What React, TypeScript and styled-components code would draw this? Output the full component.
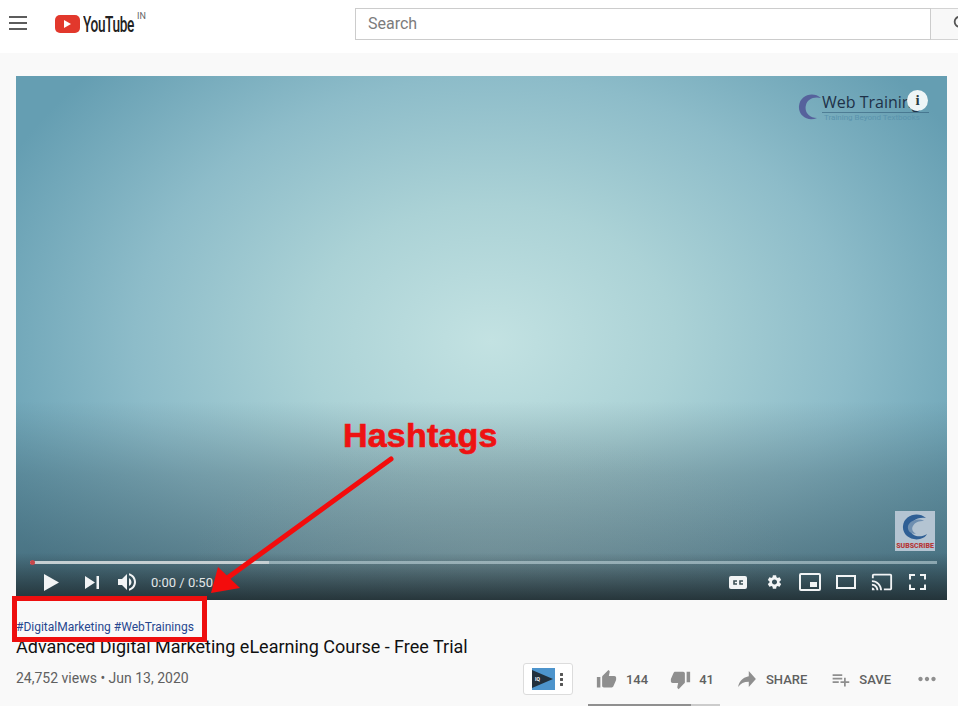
import styled, { createGlobalStyle } from "styled-components";
import {
  MdCast,
  MdMoreHoriz,
  MdPlaylistAdd,
  MdSearch,
  MdSettings,
  MdThumbDown,
  MdThumbUp,
  MdVolumeUp,
} from "react-icons/md";

const GlobalStyle = createGlobalStyle`
  html, body {
    margin: 0;
    width: 958px;
    height: 706px;
    overflow: hidden;
    background: #f9f9f9;
    font-family: Roboto, "Liberation Sans", sans-serif;
  }
  * { box-sizing: border-box; }
`;

const Page = styled.div`
  position: relative;
  width: 958px;
  height: 706px;
  overflow: hidden;
`;

const Header = styled.header`
  height: 53px;
  background: #fff;
  display: flex;
  align-items: flex-start;
  padding: 8px 0 0 9px;
`;

const Burger = styled.div`
  flex: none;
  width: 18px;
  height: 14px;
  margin-top: 8px;
  border-top: 2px solid #5c5c5c;
  border-bottom: 2px solid #5c5c5c;
  display: flex;
  align-items: center;
  &::before {
    content: "";
    width: 100%;
    height: 2px;
    background: #5c5c5c;
  }
`;

const Logo = styled.div`
  flex: none;
  display: flex;
  align-items: flex-start;
  margin-left: 28px;
  margin-top: 7px;
  width: 300px;
`;

const LogoBadge = styled.div`
  flex: none;
  width: 25px;
  height: 18px;
  background: #e2382c;
  border-radius: 5px;
  display: flex;
  align-items: center;
  justify-content: center;
  &::before {
    content: "";
    border-left: 7px solid #fff;
    border-top: 4px solid transparent;
    border-bottom: 4px solid transparent;
  }
`;

const LogoText = styled.span`
  flex: none;
  font-family: Roboto, sans-serif;
  font-weight: 500;
  font-size: 22px;
  line-height: 19px;
  letter-spacing: -0.6px;
  color: #222;
  margin-left: 3px;
  width: 54px;
  white-space: nowrap;
  transform: scaleX(0.62);
  transform-origin: left center;
`;

const Region = styled.sup`
  font-size: 9px;
  line-height: 9px;
  color: #666;
  margin: -3px 0 0 0;
`;

const Search = styled.div`
  display: flex;
  height: 32px;
  flex: none;
`;

const SearchInput = styled.div`
  width: 576px;
  border: 1px solid #ccc;
  background: #fff;
  padding-left: 12px;
  font-size: 16px;
  line-height: 29px;
  color: #7c7c7c;
`;

const SearchButton = styled.div`
  width: 65px;
  border: 1px solid #d3d3d3;
  border-left: 0;
  background: #f8f8f8;
  color: #555;
  font-size: 22px;
  padding: 4px 0 0 20px;
  display: flex;
`;

const Main = styled.main`
  padding: 23px 11px 0 16px;
`;

const Player = styled.div`
  position: relative;
  height: 524px;
  background:
    linear-gradient(to bottom, rgba(30, 42, 46, 0) 91%, rgba(30, 42, 46, 0.85) 100%),
    radial-gradient(ellipse 300px 120px at 475px 475px, rgba(150, 165, 165, 0.2), rgba(150, 165, 165, 0) 100%),
    linear-gradient(to bottom, rgba(45, 70, 82, 0) 62%, rgba(45, 70, 82, 0.28) 76%, rgba(45, 70, 82, 0.58) 100%),
    radial-gradient(ellipse 540px 400px at 475px 265px, #c3e2e2 0%, #abd2d6 34%, #8dbcc9 66%, #659eb2 100%);
`;

const Watermark = styled.div`
  position: absolute;
  top: 16px;
  right: 18px;
  width: 131px;
  height: 30px;
`;

const WatermarkTitle = styled.div`
  position: absolute;
  left: 24px;
  top: 0;
  font-family: "Open Sans", sans-serif;
  font-size: 16px;
  line-height: 20px;
  color: #1e3148;
  white-space: nowrap;
  width: 107px;
  border-bottom: 1px solid rgba(40, 80, 110, 0.5);
`;

const WatermarkSub = styled.div`
  position: absolute;
  left: 26px;
  top: 21px;
  font-size: 8px;
  line-height: 9px;
  color: #5a93ad;
  white-space: nowrap;
`;

const InfoDot = styled.div`
  position: absolute;
  top: 14px;
  right: 19px;
  width: 21px;
  height: 21px;
  border-radius: 50%;
  background: #eef5f6;
  color: #2c3a40;
  font-family: "Liberation Serif", serif;
  font-weight: 700;
  font-size: 15px;
  line-height: 21px;
  text-align: center;
`;

const SubscribeCard = styled.div`
  position: absolute;
  right: 12px;
  bottom: 49px;
  width: 40px;
  height: 40px;
  background: #b4c4d2;
  display: flex;
  flex-direction: column;
  align-items: center;
  padding-top: 2px;
`;

const SubscribeLabel = styled.div`
  font-size: 7px;
  line-height: 9px;
  font-weight: 900;
  white-space: nowrap;
  color: #b6393a;
`;

const Controls = styled.div`
  position: absolute;
  left: 14px;
  right: 10px;
  bottom: 0;
`;

const Progress = styled.div`
  position: relative;
  height: 3px;
  background: rgba(200, 220, 225, 0.55);
`;

const ProgressLoaded = styled.div`
  position: absolute;
  inset: 0 auto 0 0;
  background: #c5cfd2;
`;

const ProgressPlayed = styled.div`
  position: absolute;
  left: 0;
  top: -1px;
  width: 5px;
  height: 5px;
  border-radius: 50%;
  background: #c8474a;
`;

const ControlRow = styled.div`
  height: 36px;
  padding-right: 11px;
  display: flex;
  align-items: center;
  justify-content: space-between;
  color: #f2f4f5;
`;

const ControlGroup = styled.div`
  display: flex;
  align-items: center;
`;

const ControlIcon = styled.span<{ $w: number; $ml: number; $size?: number }>`
  display: flex;
  align-items: center;
  justify-content: center;
  flex: none;
  width: ${(p) => p.$w}px;
  margin-left: ${(p) => p.$ml}px;
  font-size: ${(p) => p.$size ?? 24}px;
`;

const TimeText = styled.span`
  margin-left: 12px;
  font-size: 13px;
  color: #e2e6e7;
`;

const Hashtags = styled.div`
  margin-top: 19px;
  font-size: 12px;
  line-height: 16px;
  color: #27478f;
`;

const Title = styled.h1`
  margin: 0;
  font-weight: 400;
  font-size: 18px;
  line-height: 24px;
  color: #111;
`;

const MetaRow = styled.div`
  margin-top: 4px;
  height: 32px;
  display: flex;
  align-items: center;
  justify-content: space-between;
`;

const Views = styled.div`
  font-size: 14px;
  margin-top: -2px;
  color: #606060;
`;

const Actions = styled.div`
  display: flex;
  align-items: center;
  margin-right: 7px;
  color: #8f8f8f;
`;

const BotCard = styled.div`
  width: 50px;
  height: 32px;
  border: 1px solid #dcdcdc;
  border-radius: 3px;
  background: #fff;
  display: flex;
  align-items: center;
  padding-left: 8px;
  gap: 5px;
  margin-right: 23px;
`;

const BotAvatar = styled.div`
  position: relative;
  width: 23px;
  height: 22px;
  background: #4d94cc;
  display: flex;
  align-items: center;
  &::before {
    content: "";
    border-left: 21px solid #22303c;
    border-top: 9px solid transparent;
    border-bottom: 9px solid transparent;
  }
`;

const BotMark = styled.span`
  position: absolute;
  left: 3px;
  top: 8px;
  font-size: 5px;
  line-height: 6px;
  font-weight: 700;
  color: #fff;
`;

const Kebab = styled.div`
  width: 3px;
  height: 15px;
  background: radial-gradient(circle at center, #555 1.4px, transparent 1.6px) 0 0 / 3px 5px repeat-y;
`;

const Rated = styled.div`
  position: relative;
  display: flex;
  align-items: center;
  margin-left: -8px;
  padding-left: 8px;
  height: 32px;
`;

const RatingBar = styled.div`
  position: absolute;
  left: 0;
  bottom: -11px;
  width: 132px;
  height: 2px;
  background: linear-gradient(to right, #909090 78%, #ccc 78%);
`;

const ActionItem = styled.div<{ $ml?: number; $gap?: number; $size?: number }>`
  display: flex;
  align-items: center;
  margin-left: ${(p) => p.$ml ?? 0}px;
  gap: ${(p) => p.$gap ?? 9}px;
  font-size: ${(p) => p.$size ?? 21}px;
`;

const ActionLabel = styled.span`
  font-size: 13px;
  font-weight: 500;
  color: #606060;
`;

const AnnotationText = styled.div`
  position: absolute;
  left: 343px;
  top: 415px;
  font-family: "Liberation Sans", Arial, sans-serif;
  font-weight: 700;
  font-size: 34px;
  line-height: 40px;
  letter-spacing: 0.2px;
  color: #ee1212;
  -webkit-text-stroke: 0.7px #ee1212;
`;

const AnnotationBox = styled.div`
  position: absolute;
  left: 12px;
  top: 596px;
  width: 195px;
  height: 46px;
  border: 5px solid #ee0f0f;
`;

const AnnotationArrow = styled.svg`
  position: absolute;
  left: 200px;
  top: 450px;
`;

export default function App() {
  return (
    <Page>
      <GlobalStyle />
      <Header>
        <Burger />
        <Logo>
          <LogoBadge />
          <LogoText>YouTube</LogoText>
          <Region>IN</Region>
        </Logo>
        <Search>
          <SearchInput>Search</SearchInput>
          <SearchButton>
            <MdSearch />
          </SearchButton>
        </Search>
      </Header>

      <Main>
        <Player>
          <Watermark>
            <svg width="26" height="30" viewBox="0 0 26 30">
              <path d="M23 6C15-1 2 3 1 14c-1 10 9 16 18 12-8 0-13-6-11-13 1-5 7-9 15-7z" fill="#56629c" />
            </svg>
            <WatermarkTitle>Web Training</WatermarkTitle>
            <WatermarkSub>Training Beyond Textbooks</WatermarkSub>
          </Watermark>
          <InfoDot>i</InfoDot>
          <SubscribeCard>
            <svg width="32" height="29" viewBox="0 0 32 29">
              <path d="M27 5C19-2 5 2 4 13c-1 9 8 15 17 13 4-1 6-3 7-5-6 4-15 3-17-4-2-7 7-14 16-12z" fill="#2f5f95" />
              <path d="M25 8C20 5 11 7 9 13c-1 5 3 8 8 8-3-2-5-5-3-8 2-4 6-5 11-5z" fill="#6f8fb0" />
            </svg>
            <SubscribeLabel>SUBSCRIBE</SubscribeLabel>
          </SubscribeCard>
          <Controls>
            <Progress>
              <ProgressLoaded style={{ width: "26.3%" }} />
              <ProgressPlayed />
            </Progress>
            <ControlRow>
              <ControlGroup>
                <ControlIcon $w={16} $ml={13}>
                  <svg width="15" height="17" viewBox="0 0 15 17">
                    <path d="M0 0l15 8.500L0 17z" fill="currentColor" />
                  </svg>
                </ControlIcon>
                <ControlIcon $w={14} $ml={26}>
                  <svg width="14" height="13" viewBox="0 0 14 13">
                    <path d="M0 0l10 6.500L0 13zM11.500 0H14v13h-2.500z" fill="currentColor" />
                  </svg>
                </ControlIcon>
                <ControlIcon $w={24} $ml={16}>
                  <MdVolumeUp />
                </ControlIcon>
                <TimeText>0:00 / 0:50</TimeText>
              </ControlGroup>
              <ControlGroup>
                <ControlIcon $w={18} $ml={0}>
                  <svg width="18" height="13" viewBox="0 0 18 13">
                    <rect width="18" height="13" rx="2" fill="currentColor" />
                    <path d="M8 5H5v3h3M14 5h-3v3h3" fill="none" stroke="#3d5056" strokeWidth="1.600" />
                  </svg>
                </ControlIcon>
                <ControlIcon $w={17} $ml={19} $size={24}>
                  <MdSettings />
                </ControlIcon>
                <ControlIcon $w={22} $ml={16}>
                  <svg width="22" height="18" viewBox="0 0 22 18">
                    <rect x="1" y="1" width="20" height="16" rx="1" fill="none" stroke="currentColor" strokeWidth="2" />
                    <rect x="11" y="9" width="7" height="5" fill="currentColor" />
                  </svg>
                </ControlIcon>
                <ControlIcon $w={20} $ml={15}>
                  <svg width="20" height="14" viewBox="0 0 20 14">
                    <rect x="1" y="1" width="18" height="12" fill="none" stroke="currentColor" strokeWidth="2" />
                  </svg>
                </ControlIcon>
                <ControlIcon $w={22} $ml={15} $size={26}>
                  <MdCast />
                </ControlIcon>
                <ControlIcon $w={17} $ml={16}>
                  <svg width="17" height="16" viewBox="0 0 17 16">
                    <path d="M1 5.500V1h5M11 1h5v4.500M16 10.500V15h-5M6 15H1v-4.500" fill="none" stroke="currentColor" strokeWidth="2" />
                  </svg>
                </ControlIcon>
              </ControlGroup>
            </ControlRow>
          </Controls>
        </Player>

        <Hashtags>#DigitalMarketing #WebTrainings</Hashtags>
        <Title>Advanced Digital Marketing eLearning Course - Free Trial</Title>
        <MetaRow>
          <Views>24,752 views • Jun 13, 2020</Views>
          <Actions>
            <BotCard>
              <BotAvatar>
                <BotMark>IQ</BotMark>
              </BotAvatar>
              <Kebab />
            </BotCard>
            <Rated>
              <ActionItem>
                <MdThumbUp />
                <ActionLabel>144</ActionLabel>
              </ActionItem>
              <ActionItem $ml={22} $gap={8}>
                <MdThumbDown />
                <ActionLabel>41</ActionLabel>
              </ActionItem>
              <RatingBar />
            </Rated>
            <ActionItem $ml={24} $gap={10}>
              <svg width="18" height="16" viewBox="2 3 20 18">
                <path d="M14 9V3l8 9-8 9v-6c-5.560 0-9.220 2.030-12 6 1.110-5.670 4.220-10.330 12-12z" fill="currentColor" />
              </svg>
              <ActionLabel>SHARE</ActionLabel>
            </ActionItem>
            <ActionItem $ml={23} $gap={8}>
              <MdPlaylistAdd />
              <ActionLabel>SAVE</ActionLabel>
            </ActionItem>
            <ActionItem $ml={23} $size={26}>
              <MdMoreHoriz />
            </ActionItem>
          </Actions>
        </MetaRow>
      </Main>

      <AnnotationText>Hashtags</AnnotationText>
      <AnnotationBox />
      <AnnotationArrow width="200" height="150" viewBox="200 450 200 150">
        <path d="M391 459L226 579" stroke="#f40c0c" strokeWidth="5" strokeLinecap="round" />
        <path d="M211 593L218 567L240 588z" fill="#f40c0c" />
      </AnnotationArrow>
    </Page>
  );
}
